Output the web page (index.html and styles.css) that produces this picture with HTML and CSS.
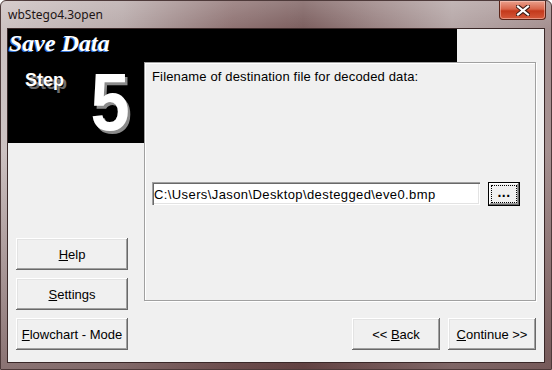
FILE: index.html
```html
<!DOCTYPE html>
<html lang="en">
  <head>
    <meta charset="UTF-8" />
    <title>wbStego4.3open</title>
    <link rel="stylesheet" href="styles.css">
  </head>
  <body>
    <div class="window">
      <div class="titlebar">
        <span class="title">wbStego4.3open</span>
        <button class="close-button" title="Close">
          <svg width="14" height="11" viewBox="0 0 14 11">
            <path d="M2 1.5 L12 9.5 M12 1.5 L2 9.5" stroke="#3a1a14" stroke-width="4.2" stroke-linecap="square" />
            <path d="M2 1.5 L12 9.5 M12 1.5 L2 9.5" stroke="#fff" stroke-width="2.2" stroke-linecap="square" />
          </svg>
        </button>
      </div>

      <div class="client">
        <div class="banner">
          <h1>Save Data</h1>
        </div>

        <div class="wizard">
          <div class="side">
            <div class="step-box">
              <span class="step-label">Step</span>
              <span class="step-number">5</span>
            </div>

            <div class="side-buttons">
              <button class="btn side-btn"><u>H</u>elp</button>
              <button class="btn side-btn"><u>S</u>ettings</button>
              <button class="btn side-btn"><u>F</u>lowchart - Mode</button>
            </div>
          </div>

          <div class="main">
            <div class="panel">
              <p class="prompt">Filename of destination file for decoded data:</p>
              <div class="file-row">
                <input class="file-input" type="text" value="C:\Users\Jason\Desktop\destegged\eve0.bmp" />
                <button class="btn browse-btn"><span class="focus-ring">...</span></button>
              </div>
            </div>

            <div class="nav">
              <button class="btn nav-btn">&lt;&lt; <u>B</u>ack</button>
              <button class="btn nav-btn"><u>C</u>ontinue &gt;&gt;</button>
            </div>
          </div>
        </div>
      </div>
    </div>
  </body>
</html>
```

FILE: styles.css
```css
* {
  margin: 0;
  padding: 0;
  box-sizing: border-box;
}

body {
  width: 552px;
  height: 370px;
  overflow: hidden;
  background: #ffffff;
  font-family: "Liberation Sans", Arial, sans-serif;
}

/* window frame (aero basic look) */
.window {
  width: 552px;
  height: 370px;
  border: 1px solid #4e3a3a;
  border-radius: 6px 6px 0 0;
  padding: 0 6px 6px 6px;
  display: flex;
  flex-direction: column;
  background:
    linear-gradient(to bottom, rgba(255, 255, 255, 0.18) 0px, rgba(255, 255, 255, 0) 28px, rgba(0, 0, 0, 0) 150px, rgba(70, 35, 35, 0.5) 370px),
    linear-gradient(to right, #cdc2c2 0%, #b9abab 22%, #8f7373 42%, #7c5f5f 55%, #9a8383 68%, #b5a6a6 82%, #a48f8f 100%);
}

.titlebar {
  height: 27px;
  display: flex;
  align-items: flex-start;
  justify-content: space-between;
  padding-left: 1px;
}

.title {
  font-family: "Noto Sans", "Open Sans", sans-serif;
  font-size: 12px;
  line-height: 16px;
  margin-top: 6px;
  color: #1c1414;
}

.close-button {
  width: 47px;
  height: 19px;
  margin-right: -1px;
  border: 1px solid #5a2418;
  border-top: none;
  border-radius: 0 0 4px 4px;
  background: linear-gradient(to bottom, #eaa08c 0%, #d8654a 45%, #c4391b 55%, #d4583a 100%);
  box-shadow: inset 0 0 0 1px rgba(255, 220, 210, 0.45);
  display: flex;
  align-items: center;
  justify-content: center;
}

.client {
  flex: 1;
  border: 1px solid #3a2828;
  background: #f0f0f0;
  display: flex;
  flex-direction: column;
}

/* black title banner */
.banner {
  width: 449px;
  height: 33px;
  background: #000000;
  padding-top: 2px;
}

.banner h1 {
  font-family: "Liberation Serif", "Times New Roman", serif;
  font-style: italic;
  font-weight: bold;
  font-size: 24px;
  line-height: 1;
  color: #ffffff;
  text-shadow: -1px 1px 0 #3a78d8;
  padding-left: 1px;
}

.wizard {
  flex: 1;
  display: flex;
}

.side {
  width: 136px;
  display: flex;
  flex-direction: column;
}

.step-box {
  height: 81px;
  background: #000000;
  display: flex;
  align-items: flex-start;
  padding: 9px 14px 0 17px;
}

.step-label {
  font-weight: bold;
  font-size: 18px;
  line-height: 1;
  color: #ffffff;
  text-shadow: 3px 3px 0 #6e6e6e;
}

.step-number {
  display: inline-block;
  margin-left: auto;
  margin-top: -10px;
  font-weight: bold;
  font-size: 82px;
  line-height: 1;
  color: #ffffff;
  text-shadow: 3px 3px 0 #8a8a8a;
  transform: scaleX(0.86);
  transform-origin: right top;
}

.side-buttons {
  margin: 95px 0 0 8px;
  display: flex;
  flex-direction: column;
  gap: 8px;
}

/* classic 3D push button */
.btn {
  background: #f0f0f0;
  border: none;
  font-family: "Liberation Sans", Arial, sans-serif;
  font-size: 13px;
  color: #000000;
  box-shadow:
    inset -1px -1px #696969,
    inset 1px 1px #ffffff,
    inset -2px -2px #a0a0a0,
    inset 2px 2px #e3e3e3;
}

.side-btn {
  width: 112px;
  height: 32px;
}

.main {
  flex: 1;
  padding-right: 8px;
  display: flex;
  flex-direction: column;
}

.panel {
  height: 239px;
  border: 1px solid #a0a0a0;
  box-shadow: inset 1px 1px #ffffff, 1px 1px #ffffff;
  padding: 6px 7px 0 7px;
}

.prompt {
  font-size: 13px;
  line-height: 16px;
  letter-spacing: 0.15px;
  color: #000000;
}

.file-row {
  margin-top: 97px;
  display: flex;
  align-items: flex-start;
  gap: 8px;
}

.file-input {
  width: 328px;
  height: 23px;
  border: none;
  outline: none;
  background: #ffffff;
  padding: 2px 2px 0 2px;
  font-family: "Liberation Sans", Arial, sans-serif;
  font-size: 13px;
  letter-spacing: 0.4px;
  color: #000000;
  box-shadow:
    inset 1px 1px #a0a0a0,
    inset 2px 2px #696969,
    inset -1px -1px #ffffff,
    inset -2px -2px #e3e3e3;
}

.browse-btn {
  width: 32px;
  height: 24px;
  padding: 3px;
  box-shadow:
    inset 0 0 0 1px #000000,
    inset -2px -2px #696969,
    inset 2px 2px #ffffff,
    inset -3px -3px #a0a0a0;
}

.focus-ring {
  display: block;
  height: 100%;
  border: 1px dotted #000000;
  font-weight: bold;
  font-size: 14px;
  line-height: 12px;
  letter-spacing: 0.5px;
}

.nav {
  margin-top: 17px;
  display: flex;
  justify-content: flex-end;
  gap: 8px;
}

.nav-btn {
  width: 88px;
  height: 32px;
}
```
